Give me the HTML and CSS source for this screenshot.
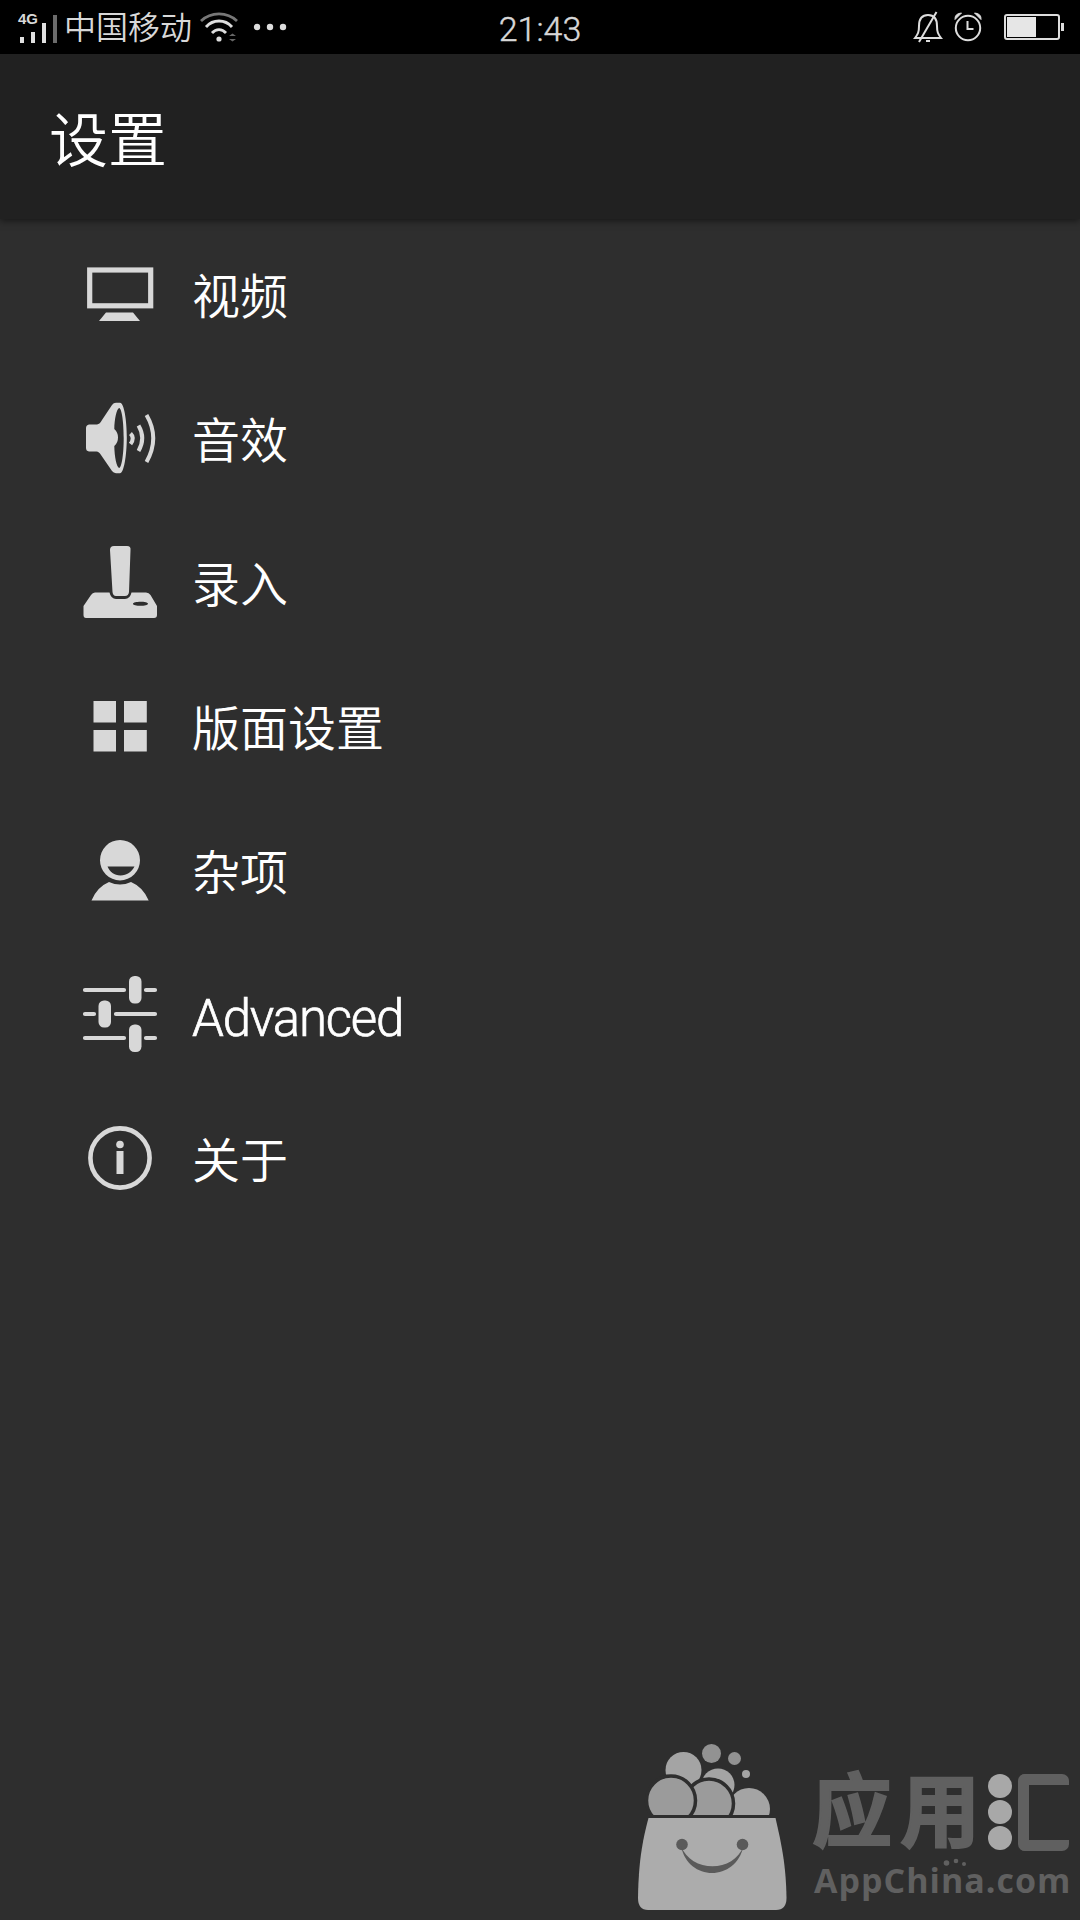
FILE: index.html
```html
<!DOCTYPE html>
<html lang="zh-CN">
<head>
<meta charset="utf-8">
<title>设置</title>
<link rel="stylesheet" href="styles.css">
</head>
<body>
<div class="screen">
  <header class="statusbar">
    <div class="status-left">
      <div class="signal">
        <span class="network">4G</span>
        <svg class="bars" width="40" height="30" viewBox="0 0 40 30"><g fill="#e0e0e0"><rect x="2" y="24" width="4" height="6"/><rect x="13" y="19" width="4" height="11"/><rect x="24" y="10" width="4" height="20"/></g><rect x="35" y="2" width="4" height="28" fill="#6b6b6b"/></svg>
      </div>
      <span class="carrier">中国移动</span>
      <svg class="wifi" width="40" height="32" viewBox="0 0 40 32" fill="none" stroke="#ddd" stroke-width="2.8"><path d="M2 10C12 .500 28 .500 38 10" stroke="#777"/><path d="M7 16C14 8 26 8 33 16"/><path d="M13 22C17 17.500 23 17.500 27 22"/><circle cx="20" cy="28" r="2.600" fill="#ddd" stroke="none"/><path d="M30 25l3.500-2.500 3.500 2.500zM30 28h7l-3.500 2.500z" fill="#666" stroke="none"/></svg>
      <svg class="dots" width="34" height="8" viewBox="0 0 34 8" fill="#ddd"><circle cx="4" cy="4" r="3.200"/><circle cx="17" cy="4" r="3.200"/><circle cx="30" cy="4" r="3.200"/></svg>
    </div>
    <time class="clock">21:43</time>
    <div class="status-right">
      <svg width="30" height="32" viewBox="0 0 30 32" fill="none" stroke="#ddd" stroke-width="2"><path d="M2 27C5 23 6 21 6 15C6 8 9 4 15 4S24 8 24 15C24 21 25 23 28 27Z"/><path d="M23.500 1L6 31"/><path d="M13 30h4"/></svg>
      <svg class="alarm" width="30" height="30" viewBox="0 0 30 30" fill="none" stroke="#ddd" stroke-width="2"><circle cx="15" cy="16" r="12.200"/><path d="M14.500 9v8h6"/><path d="M2 7.500Q1.500 1.500 8.500 1ZM28 7.500Q28.500 1.500 21.500 1Z" fill="#ddd" stroke-width="1"/></svg>
      <svg class="battery" width="60" height="26" viewBox="0 0 60 26"><rect x="1" y="1" width="54" height="24" rx="2" fill="none" stroke="#ddd" stroke-width="2"/><rect x="3" y="3" width="29" height="20" fill="#e6e6e6"/><path d="M57 9h3v8h-3z" fill="#ddd"/></svg>
    </div>
  </header>
  <div class="titlebar"><h1>设置</h1></div>
  <main class="list">
    <div class="item">
      <svg class="icon" viewBox="0 0 80 80"><rect x="9.700" y="16" width="61" height="35.800" fill="none" stroke="#d8d8d8" stroke-width="5.200"/><path d="M26 58.500h27l7 8.500H19z"/></svg>
      <span class="label">视频</span>
    </div>
    <div class="item">
      <svg class="icon" viewBox="0 0 80 80"><path fill-rule="evenodd" d="M9 26.500H17Q20 26 22 22L32 7Q33.500 4.700 36 4.700H40C44 4.700 46.800 22 46.800 39.500S44 75.300 40 75.300H36Q33.500 75 32 73L21 57Q19 53.500 16.500 53.500H9Q6 53 6 50V30Q6 27 9 26.500ZM39.200 10C36.500 11 34.500 21 34.300 31Q38 34 38 39.500T34.300 48C34.500 59 36.500 69 39.200 70C42 69 43.700 55 43.700 40S42 11 39.200 10Z"/><g fill="none" stroke="#d8d8d8" stroke-width="4"><path d="M50.500 35.500Q55 40 50.500 46"/><path d="M58.500 27.500Q66 40 58.500 53"/><path d="M66.500 17Q80 40 66.500 64"/></g></svg>
      <span class="label">音效</span>
    </div>
    <div class="item">
      <svg class="icon" viewBox="0 0 80 80"><path d="M30 8Q30 4 34 4H47Q51 4 50.500 8L49 50Q48.500 54 45 54H36Q33 54 32.500 50Z"/><path fill-rule="evenodd" d="M15 50.500H29.500Q31 57 36 57H45Q50 57 51.500 50.500H66Q69 50.500 70.500 53L77 64V73Q77 76 74 76H6Q3.500 76 3.500 73V64L11 53Q12.500 50.500 15 50.500ZM53 61.700C53 60.500 56.500 59.700 60.500 59.700S68 60.500 68 61.700S64.500 63.800 60.500 63.800S53 63 53 61.700Z"/></svg>
      <span class="label">录入</span>
    </div>
    <div class="item">
      <svg class="icon" viewBox="0 0 80 80"><path d="M13.500 15h22.500v21.500h-22.500zM44 15h22.800v21.500h-22.800zM13.500 44h22.500v21.500h-22.500zM44 44h22.800v21.500h-22.800z"/></svg>
      <span class="label">版面设置</span>
    </div>
    <div class="item">
      <svg class="icon" viewBox="0 0 80 80"><path fill-rule="evenodd" d="M40 10A20 20.200 0 0 1 40 50.400A20 20.200 0 0 1 40 10ZM27.500 36.500C30 42 34 45.500 40.500 45.500S51.500 42 54.500 36.500Z"/><path d="M11.500 70.500Q17 57 29 52Q40 57 51 52Q63 57 68.700 70.500Z"/></svg>
      <span class="label">杂项</span>
    </div>
    <div class="item">
      <svg class="icon" viewBox="0 0 80 80"><g fill="none" stroke="#d8d8d8" stroke-width="4.200" stroke-linecap="round"><path d="M5 16H44M66 16H75M5 40H14M36 40H75M5 64H44M66 64H75"/></g><rect x="49" y="2" width="12.500" height="27.500" rx="5.500"/><rect x="18.500" y="26.500" width="12.500" height="27" rx="5.500"/><rect x="49" y="50.500" width="12.500" height="27.500" rx="5.500"/></svg>
      <span class="label latin">Advanced</span>
    </div>
    <div class="item">
      <svg class="icon" viewBox="0 0 80 80"><circle cx="40" cy="40" r="29.600" fill="none" stroke="#d8d8d8" stroke-width="4.600"/><circle cx="40" cy="26.500" r="3.800"/><path d="M36.500 33h7v23h-7z"/></svg>
      <span class="label">关于</span>
    </div>
  </main>
  <footer class="watermark">
    <svg class="bag" width="150" height="168" viewBox="0 0 150 168">
      <g fill="#a4a4a4"><circle cx="45.500" cy="26" r="18"/><circle cx="73.500" cy="9.500" r="9.500" fill="#929292"/><circle cx="96.500" cy="14.500" r="6.500" fill="#929292"/><circle cx="108" cy="30" r="4"/><circle cx="80" cy="41" r="16.500"/><circle cx="111" cy="65" r="21"/></g>
      <g fill="#9b9b9b" stroke="#2e2e2e" stroke-width="3.500"><circle cx="71" cy="59.500" r="24.500"/><circle cx="33" cy="56.500" r="24.500"/></g>
      <path d="M0 71H150V95H0Z" fill="#2e2e2e"/>
      <path d="M10.500 74H137.500C143 98 148 120 148.500 154Q148.500 166 138 166H10Q0 166 0 154C.500 120 4 98 10.500 74Z" fill="#acacac"/>
      <g fill="#5a5a5a"><circle cx="44" cy="100.500" r="5.800"/><circle cx="104.500" cy="100.500" r="5.800"/><path d="M43 102C50 138 98 138 105.500 102C96 129 53 129 43 102Z"/></g>
    </svg>
    <div class="brand">
      <div class="brand-name">
        <span class="brand-text">应用</span>
        <span class="beads"><i></i><i></i><i></i></span>
        <span class="bracket"></span>
      </div>
      <div class="domain">AppChina.com<svg class="sparks" width="24" height="8" viewBox="0 0 24 8" fill="#606060"><circle cx="3.500" cy="5" r="2.800"/><circle cx="13" cy="3" r="2.300"/><circle cx="21" cy="6" r="2"/></svg></div>
    </div>
  </footer>
</div>
</body>
</html>
```
FILE: styles.css
```css
* { box-sizing: border-box; }
body { margin: 0; background: #2e2e2e; color: #fff; font-family: "Liberation Sans", "Noto Sans CJK SC", sans-serif; }
.screen { width: 1080px; height: 1920px; display: flex; flex-direction: column; overflow: hidden; }
.statusbar { height: 54px; flex: none; background: #000; color: #d8d8d8; display: grid; grid-template-columns: 1fr auto 1fr; padding: 0 16px 0 18px; }
.status-left, .status-right { display: flex; align-items: center; height: 54px; }
.status-right { justify-content: flex-end; }
.signal { position: relative; width: 40px; height: 30px; margin-top: 1px; }
.network { position: absolute; left: 0; top: -2px; font-size: 15px; line-height: 15px; font-weight: 700; }
.bars { display: block; }
.carrier { margin-left: 6px; font: 350 32px/50px "Noto Sans CJK SC", sans-serif; height: 54px; }
.wifi { margin-left: 7px; }
.dots { margin-left: 14px; }
.clock { font: 300 34px/59px Roboto, sans-serif; margin-left: -2px; -webkit-text-stroke: .4px #d8d8d8; }
.alarm { margin-left: 10px; }
.battery { margin-left: 21px; }
.titlebar { height: 165px; flex: none; background: #212121; padding: 0 49px; box-shadow: 0 2px 7px rgba(0, 0, 0, .5); }
h1 { margin: 0; font: 350 59px/165px "Noto Sans CJK SC", sans-serif; }
.list { flex: 1; padding-top: 3px; }
.item { height: 144px; display: flex; align-items: center; padding-left: 80px; }
.icon { width: 80px; height: 80px; fill: #d8d8d8; }
.label { margin-left: 32px; padding-bottom: 2px; font: 350 48px/72px "Noto Sans CJK SC", sans-serif; }
.latin { font: 300 51px/72px Roboto, sans-serif; letter-spacing: -1.2px; padding: 9px 0 0; -webkit-text-stroke: .7px #fff; }
.watermark { height: 178px; display: flex; justify-content: flex-end; padding-right: 9px; }
.bag { margin-top: 2px; }
.brand { width: 257px; margin-left: 26px; padding-top: 29px; color: #606060; }
.brand-name { height: 83px; display: flex; align-items: flex-start; }
.brand-text { width: 174px; margin-left: -2px; margin-top: -6px; font: 700 80px/80px "Noto Sans CJK SC", sans-serif; letter-spacing: 8px; white-space: nowrap; -webkit-text-stroke: 2px #606060; }
.beads { display: flex; flex-direction: column; gap: 2px; margin: 3px 0 0 2px; }
.beads i { width: 24px; height: 24px; border-radius: 50%; background: #a8a8a8; }
.bracket { width: 51px; height: 77px; margin: 3px 0 0 6px; border: 11px solid #606060; border-right: 0; border-radius: 7px; }
.domain { position: relative; font: 700 34px/46px "Open Sans", sans-serif; letter-spacing: 1px; padding-top: 3px; white-space: nowrap; }
.sparks { position: absolute; left: 129px; top: 4px; }
```
